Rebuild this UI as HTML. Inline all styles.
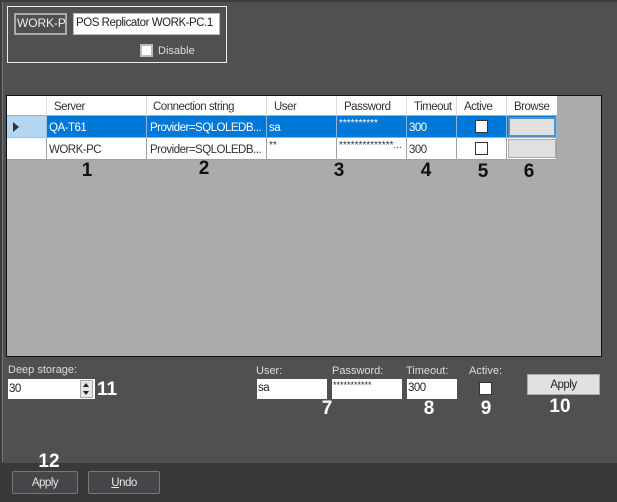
<!DOCTYPE html>
<html><head><meta charset="utf-8">
<style>
html,body{margin:0;padding:0}
body{width:617px;height:502px;overflow:hidden;position:relative;background:#505050;font-family:"Liberation Sans",sans-serif;font-size:11.5px;letter-spacing:-.5px;color:#222}
div{position:absolute;box-sizing:border-box;white-space:nowrap}
.c{border-right:1px solid #a0a0a0;border-bottom:1px solid #a0a0a0;height:22px;line-height:24px;padding-left:3px;overflow:hidden}
.h{top:96px;height:20px;line-height:22px;background:#fff;border-right:1px solid #dcdcdc;border-bottom:1px solid #a0b0c0;color:#333;padding-left:7px}
.r1{top:116px;background:#0078d7;color:#fff;border-color:#8ab4dc}
.r2{top:138px;background:#fff;color:#333}
.lb{color:#ddd;font-size:11px;letter-spacing:0;line-height:14px}
.n{font-weight:bold;font-size:19px;letter-spacing:0;line-height:20px;color:#111;text-align:center;width:20px}
.w{color:#fff}
.inp{background:#fff;color:#222;line-height:19px;padding-left:1px}
.cb{background:#fff;width:13px;height:13px;border:1px solid #333}
.bb{background:#e0e0e0;border:1px solid #b0b0b0;top:0}
.fb{border:1px solid #777;border-radius:2px;background:#46464a;color:#e6e6e6;text-align:center;line-height:23px;top:471px;height:23px}
.st{font-size:10px;letter-spacing:0;line-height:16px!important}
</style></head><body>
<div style="left:0;top:0;width:617px;height:2px;background:#3c3c3c"></div>
<div style="left:0;top:0;width:2px;height:502px;background:#3c3c3c"></div>
<div style="left:2px;top:2px;width:1px;height:460px;background:#777"></div>

<div style="left:7px;top:6px;width:220px;height:57px;border:1px solid #eee"></div>
<div style="left:14px;top:13px;width:53px;height:22px;border:2px solid #aaa;background:#505050;color:#eee;font-size:12px;letter-spacing:-.1px;line-height:17px;padding-left:1px;overflow:hidden">WORK-PC</div>
<div style="left:73px;top:13px;width:147px;height:22px;border:1px solid #bbb;background:#fff;color:#222;font-size:11.5px;letter-spacing:-.45px;line-height:19px;padding-left:2px">POS Replicator WORK-PC.1</div>
<div style="left:140px;top:44px;width:13px;height:13px;background:#fff;border:2px solid #bbb"></div>
<div class="lb" style="left:158px;top:44px">Disable</div>

<div style="left:6px;top:95px;width:596px;height:262px;background:#ababab;border:1px solid #111"></div>
<div class="h" style="left:7px;width:40px"></div>
<div class="h" style="left:47px;width:100px">Server</div>
<div class="h" style="left:147px;width:120px;padding-left:6px">Connection string</div>
<div class="h" style="left:267px;width:70px">User</div>
<div class="h" style="left:337px;width:70px">Password</div>
<div class="h" style="left:407px;width:50px">Timeout</div>
<div class="h" style="left:457px;width:50px">Active</div>
<div class="h" style="left:507px;width:50px;border-right:0">Browse</div>

<div class="c" style="left:7px;top:116px;width:40px;background:#b3d7f2;border-color:#a0c0dc"></div>
<div style="left:13px;top:122px;width:0;height:0;border-left:6px solid #333;border-top:5px solid transparent;border-bottom:5px solid transparent"></div>
<div class="c r1" style="left:47px;width:100px;padding-left:2px">QA-T61</div>
<div class="c r1" style="left:147px;width:120px">Provider=SQLOLEDB...</div>
<div class="c r1" style="left:267px;width:70px;padding-left:2px">sa</div>
<div class="c r1 st" style="left:337px;width:70px;padding-left:2px">**********</div>
<div class="c r1" style="left:407px;width:50px;padding-left:2px">300</div>
<div class="c r1" style="left:457px;width:50px"></div>
<div class="c r1" style="left:507px;width:50px"></div>
<div class="bb" style="left:508px;top:117px;width:48px;height:20px;border:2px solid #5a8fc0"></div>
<div class="cb" style="left:475px;top:120px"></div>

<div class="c" style="left:7px;top:138px;width:40px;background:#fff"></div>
<div class="c r2" style="left:47px;width:100px;padding-left:2px">WORK-PC</div>
<div class="c r2" style="left:147px;width:120px">Provider=SQLOLEDB...</div>
<div class="c r2 st" style="left:267px;width:70px;padding-left:2px">**</div>
<div class="c r2 st" style="left:337px;width:70px;padding-left:2px">**************...</div>
<div class="c r2" style="left:407px;width:50px;padding-left:2px">300</div>
<div class="c r2" style="left:457px;width:50px"></div>
<div class="c r2" style="left:507px;width:50px"></div>
<div class="bb" style="left:508px;top:139px;width:48px;height:19px;border:1px solid #aaa"></div>
<div class="cb" style="left:475px;top:142px"></div>

<div class="n" style="left:77px;top:161px">1</div>
<div class="n" style="left:194px;top:159px">2</div>
<div class="n" style="left:329px;top:161px">3</div>
<div class="n" style="left:416px;top:161px">4</div>
<div class="n" style="left:473px;top:162px">5</div>
<div class="n" style="left:519px;top:162px">6</div>

<div class="lb" style="left:8px;top:363px">Deep storage:</div>
<div class="inp" style="left:8px;top:379px;width:87px;height:20px;line-height:20px;padding-left:1px">30</div>
<div style="left:80px;top:380px;width:13px;height:18px;background:#e6e6e6;border:1px solid #aaa"></div>
<div style="left:83px;top:383px;width:0;height:0;border-left:3.5px solid transparent;border-right:3.5px solid transparent;border-bottom:4px solid #222"></div>
<div style="left:83px;top:391px;width:0;height:0;border-left:3.5px solid transparent;border-right:3.5px solid transparent;border-top:4px solid #222"></div>
<div class="n w" style="left:96px;top:380px;width:22px">11</div>

<div class="lb" style="left:256px;top:364px">User:</div>
<div class="lb" style="left:332px;top:364px">Password:</div>
<div class="lb" style="left:406px;top:364px">Timeout:</div>
<div class="lb" style="left:469px;top:364px">Active:</div>
<div class="inp" style="left:257px;top:379px;width:70px;height:20px">sa</div>
<div class="inp" style="left:332px;top:379px;width:70px;height:20px;font-size:9px;letter-spacing:0;line-height:13px">***********</div>
<div class="inp" style="left:407px;top:379px;width:50px;height:20px">300</div>
<div style="left:479px;top:382px;width:13px;height:13px;background:#fff;border:1px solid #333"></div>
<div style="left:527px;top:374px;width:73px;height:21px;background:#e1e1e1;border:1px solid #aaa;color:#222;text-align:center;line-height:20px">Apply</div>

<div class="n w" style="left:317px;top:399px">7</div>
<div class="n w" style="left:419px;top:399px">8</div>
<div class="n w" style="left:476px;top:399px">9</div>
<div class="n w" style="left:549px;top:397px;width:22px">10</div>

<div style="left:0;top:463px;width:617px;height:39px;background:#3a3839"></div>
<div class="n w" style="left:38px;top:452px;width:22px">12</div>
<div class="fb" style="left:12px;width:66px">Apply</div>
<div class="fb" style="left:88px;width:72px"><u>U</u>ndo</div>
</body></html>
